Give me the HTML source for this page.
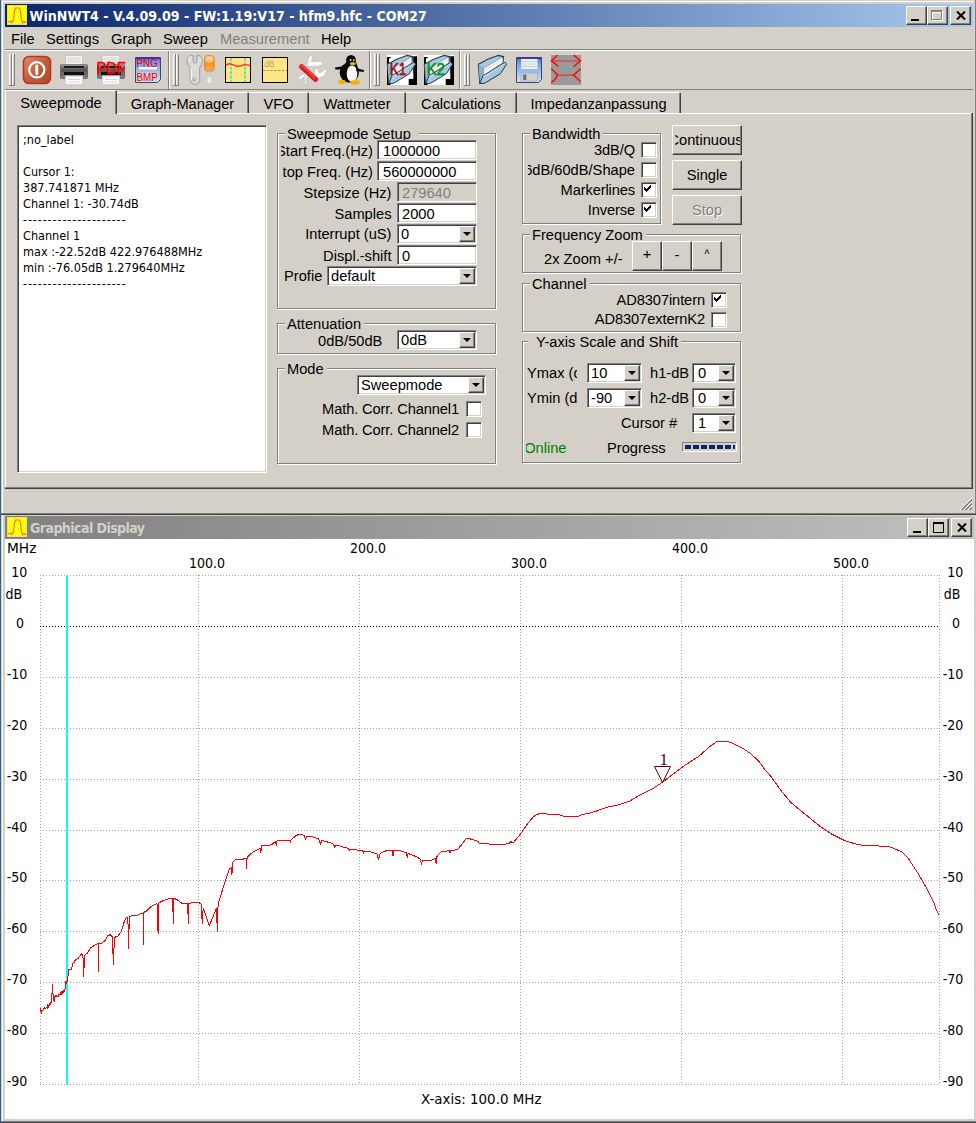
<!DOCTYPE html>
<html><head><meta charset="utf-8"><title>WinNWT4</title>
<style>
*{box-sizing:border-box;margin:0;padding:0}
html,body{width:976px;height:1123px;overflow:hidden}
body{background:#d4d0c8;font-family:"Liberation Sans",sans-serif;font-size:14.67px;color:#000;position:relative}
.a{position:absolute}
.t{position:absolute;white-space:pre;line-height:18px;height:18px}
.r{text-align:right}
.tah{font-family:"DejaVu Sans Condensed","DejaVu Sans",sans-serif}
.btn{position:absolute;background:#d4d0c8;border:1px solid;border-color:#fff #404040 #404040 #fff;box-shadow:inset -1px -1px 0 #808080}
.cb{position:absolute;background:#d4d0c8;border:1px solid;border-color:#fff #404040 #404040 #fff;box-shadow:inset -1px -1px 0 #808080,inset 1px 1px 0 #d4d0c8}
.sunk{position:absolute;background:#fff;border:1px solid;border-color:#808080 #fff #fff #808080;box-shadow:inset 1px 1px 0 #404040,inset -1px -1px 0 #d4d0c8}
.grp{position:absolute;border:1px solid #808080;box-shadow:1px 1px 0 #fff,inset 1px 1px 0 #fff}
.gl{position:absolute;background:#d4d0c8;white-space:pre;line-height:14px;height:14px;padding:0 3px 0 2px}
.chk{position:absolute;width:16px;height:16px;background:#fff;border:1px solid;border-color:#808080 #fff #fff #808080;box-shadow:inset 1px 1px 0 #404040,inset -1px -1px 0 #d4d0c8}
.dd{position:absolute;width:16px;background:#d4d0c8;border:1px solid;border-color:#fff #404040 #404040 #fff;box-shadow:inset -1px -1px 0 #808080}
.dd:after{content:"";position:absolute;left:3px;top:5px;border:4px solid transparent;border-top:4px solid #000;border-bottom:0}
.ck{position:absolute;left:2px;top:2px}
</style></head><body>
<!-- desktop strip -->
<div class="a" style="left:0;top:0;width:1px;height:1123px;background:#2a63a2"></div>
<!-- ===== top window frame ===== -->
<div class="a" style="left:2px;top:1px;width:972px;height:1px;background:#fff"></div>
<div class="a" style="left:2px;top:1px;width:1px;height:512px;background:#fff"></div>
<div class="a" style="left:975px;top:0;width:1px;height:515px;background:#808080"></div>
<div class="a" style="left:1px;top:513px;width:975px;height:1px;background:#808080"></div>
<div class="a" style="left:1px;top:514px;width:975px;height:1px;background:#404040"></div>
<!-- title bar -->
<div class="a" style="left:5px;top:4px;width:968px;height:23px;background:linear-gradient(90deg,#0a246a 0%,#a6caf0 100%)"></div>
<!-- title icon -->
<svg class="a" style="left:7px;top:5px" width="20" height="20" viewBox="0 0 20 20"><rect width="20" height="20" fill="#ffff00"/><rect x="0.5" y="0.5" width="19" height="19" fill="none" stroke="#e8e070"/><path d="M1 16.5 L3 17 L4 16 L5 17.5 L6.5 15 L7.5 6 L8.5 3 L12.5 3 L13.5 6 L14.5 15 L15.5 18 L17 16.5 L18 17.5 L19 17" fill="none" stroke="#ff7010" stroke-width="1.1"/></svg>
<div class="t tah" style="left:29.5px;top:7px;color:#fff;font-weight:bold;font-size:14.1px;line-height:19px;height:19px">WinNWT4 - V.4.09.09 - FW:1.19:V17 - hfm9.hfc - COM27</div>
<!-- title buttons -->
<div class="btn" style="left:906px;top:6px;width:21px;height:19px"><div class="a" style="left:4px;top:12px;width:8px;height:2px;background:#000"></div></div>
<div class="btn" style="left:927px;top:6px;width:21px;height:19px"><div class="a" style="left:4px;top:4px;width:11px;height:10px;border:1px solid #fff;border-top:2px solid #fff"></div><div class="a" style="left:3px;top:3px;width:11px;height:10px;border:1px solid #808080;border-top:2px solid #808080"></div></div>
<div class="btn" style="left:950px;top:6px;width:21px;height:19px"><svg class="a" style="left:4.5px;top:4px" width="10" height="9" viewBox="0 0 10 9"><path d="M1 0.5 L9 8.5 M9 0.5 L1 8.5" stroke="#000" stroke-width="2"/></svg></div>
<!-- menu -->
<div class="t" style="left:11px;top:30px">File</div>
<div class="t" style="left:46px;top:30px">Settings</div>
<div class="t" style="left:111px;top:30px">Graph</div>
<div class="t" style="left:163px;top:30px">Sweep</div>
<div class="t" style="left:220px;top:30px;color:#808080">Measurement</div>
<div class="t" style="left:321px;top:30px">Help</div>
<div class="a" style="left:5px;top:49px;width:968px;height:1px;background:#808080"></div>
<div class="a" style="left:5px;top:50px;width:968px;height:1px;background:#fff"></div>
<div class="a" style="left:5px;top:89px;width:968px;height:1px;background:#808080"></div>
<!-- toolbar -->
<svg class="a" style="left:0;top:51px" width="600" height="38" viewBox="0 51 600 38">
<defs>
<linearGradient id="gp" x1="0" y1="0" x2="1" y2="1"><stop offset="0" stop-color="#dc9070"/><stop offset="0.5" stop-color="#c0603c"/><stop offset="1" stop-color="#ac4624"/></linearGradient>
<linearGradient id="gf" x1="0" y1="0" x2="0" y2="1"><stop offset="0" stop-color="#5078d8"/><stop offset="0.4" stop-color="#88b2ee"/><stop offset="1" stop-color="#d0e4f8"/></linearGradient>
<linearGradient id="go" x1="0" y1="0" x2="0" y2="1"><stop offset="0" stop-color="#ffb860"/><stop offset="0.5" stop-color="#ff9010"/><stop offset="1" stop-color="#f8ac60"/></linearGradient>
<linearGradient id="gb" x1="0" y1="0" x2="1" y2="1"><stop offset="0" stop-color="#c8e2f4"/><stop offset="1" stop-color="#86b2d2"/></linearGradient>
<g id="hdl"><rect x="0" y="0" width="3" height="32" fill="#808080"/><rect x="0" y="0" width="2" height="31" fill="#fff"/><rect x="1" y="1" width="1" height="30" fill="#d4d0c8"/><rect x="3" y="0" width="3" height="32" fill="#808080"/><rect x="3" y="0" width="2" height="31" fill="#fff"/><rect x="4" y="1" width="1" height="30" fill="#d4d0c8"/></g>
<g id="prn"><rect x="5.5" y="0.5" width="17" height="9" fill="#f4f4f4" stroke="#c8c8c8"/><rect x="7" y="2" width="14" height="6" fill="#e4e4e4"/><path d="M2 9 H26 Q28 9 28 11 V22 Q28 24 26 24 H2 Q0 24 0 22 V11 Q0 9 2 9 Z" fill="#6a6a6a"/><rect x="1" y="9" width="26" height="3" fill="#8a8a8a"/><rect x="4" y="11" width="20" height="2" fill="#1c1c1c"/><rect x="1" y="14" width="26" height="3" fill="#585858"/><rect x="4" y="17" width="20" height="3" fill="#101010"/><rect x="1" y="20.5" width="26" height="3" fill="#7c7c7c"/><rect x="5.5" y="21" width="17" height="8.5" fill="#fafafa" stroke="#d0d0d0"/><rect x="8" y="24" width="12" height="1" fill="#d4d4d4"/><rect x="8" y="26.5" width="12" height="1" fill="#d8d8d8"/></g>
<g id="fld"><path d="M0.3 9.3 L6.75 6.1 L8.4 4.8 L19.9 0.4 L25.6 1.6 L25.2 5.7 L24 12 L1.8 28.6 Z" fill="#a4cce6" stroke="#22384a" stroke-width="1.1" stroke-linejoin="round"/><path d="M0.6 9.6 L5.9 12.6 L4.3 21.2 L1.9 28 Z" fill="#8cb2cc"/><path d="M5.9 13 L23.6 2.4 L25 3 L24.8 7.7 L5.1 20.6 Z" fill="#f7f7f7" stroke="#707070" stroke-width="0.6"/><path d="M6.6 15.4 L24.6 4.6" stroke="#cfcfcf" stroke-width="0.7"/><path d="M1.8 28.6 L5.1 20.4 L9.2 18.4 L27.2 7.3 L28.5 9.3 L22.3 18.8 L6.75 28.2 Z" fill="url(#gb)" stroke="#22384a" stroke-width="1" stroke-linejoin="round"/><path d="M5.6 20.9 L9.4 19.2 L27 8.2" stroke="#e0f0fa" stroke-width="0.7" fill="none"/></g>
</defs>
<use href="#hdl" x="9" y="54"/>
<rect x="23.5" y="56.5" width="27" height="27" rx="5.5" fill="url(#gp)" stroke="#b83422" stroke-width="1.6"/>
<circle cx="36.8" cy="69.8" r="7.6" fill="none" stroke="#fff" stroke-width="2.2"/><rect x="35.4" y="64.5" width="2.8" height="10.6" rx="1" fill="#fff"/>
<use href="#prn" x="60" y="55"/>
<use href="#prn" x="97" y="55"/>
<text x="96.4" y="74.3" font-family="Liberation Sans, sans-serif" font-size="15.8" fill="#ff0000" stroke="#ff0000" stroke-width="0.5" textLength="29.4" lengthAdjust="spacingAndGlyphs">PDF</text>
<path d="M135.5 57.5 H160.5 V79.5 L157.5 82.5 H135.5 Z" fill="url(#gf)" stroke="#38486c"/><rect x="136" y="57.5" width="24" height="1.6" fill="#4030a8"/><rect x="139" y="67" width="18" height="2.4" fill="#fff"/><rect x="139" y="72.5" width="18" height="8.5" fill="#c4cede"/>
<text x="136.4" y="66.9" font-family="Liberation Sans, sans-serif" font-size="10.6" fill="#ff0000" textLength="21.5" lengthAdjust="spacingAndGlyphs">PNG</text>
<text x="136.4" y="80.5" font-family="Liberation Sans, sans-serif" font-size="10.6" fill="#ff0000" textLength="21.5" lengthAdjust="spacingAndGlyphs">BMP</text>
<rect x="168" y="51" width="1" height="38" fill="#808080"/><rect x="169" y="51" width="1" height="38" fill="#fff"/>
<use href="#hdl" x="173" y="54"/>
<!-- wrench -->
<path d="M187 60.7 Q187.6 56.6 190.7 55.3 L193.1 55.7 L193.1 61.5 Q193.4 63.1 195.2 63.1 Q196.6 63.1 196.8 61.5 L196.8 55.7 L200.1 55.7 Q202.4 57.4 202.5 60.7 Q202 65 199.7 67.6 L199.7 80.3 Q199.4 84.2 194.8 84.4 Q190.5 84.2 190.2 80.3 L190.2 67.6 Q187.4 65 187 60.7 Z" fill="#dadada" stroke="#989898" stroke-width="0.9"/><path d="M188.4 60.5 Q188.8 57.8 190.8 56.6 M191.4 68 L191.4 80" stroke="#f8f8f8" stroke-width="1.2" fill="none"/><circle cx="194.2" cy="79.6" r="1.7" fill="#c8c8c8" stroke="#a0a0a0" stroke-width="0.7"/>
<!-- screwdriver -->
<rect x="204.6" y="55.6" width="9.6" height="15.6" rx="3" fill="url(#go)" stroke="#e08038" stroke-width="0.9"/><rect x="205.6" y="56.4" width="7.6" height="6" rx="2.4" fill="#fff" opacity="0.45"/><rect x="208" y="71.3" width="2.6" height="6" fill="#d4d4d4" stroke="#b0b0b0" stroke-width="0.5"/><path d="M207.4 76.6 Q205.8 81.5 207.6 83.8 H211.2 Q213 81.5 211.4 76.6 Z" fill="#ececec" stroke="#bcbcbc" stroke-width="0.6"/>
<!-- chart icon -->
<rect x="225.5" y="57.5" width="25" height="25" fill="#ffe680" stroke="#000"/><path d="M231 58 V82 M245 58 V82" stroke="#60dcc8" stroke-width="1.8" stroke-dasharray="3.2 1.2"/><path d="M226 65.2 L229.2 63.6 L233.3 64.8 L236.6 66.4 L240.7 66 L244 64.6 L247.2 64.8 L250 65.6" fill="none" stroke="#ff2a18" stroke-width="1.35" stroke-linejoin="round"/>
<!-- dB icon -->
<rect x="262.5" y="57.5" width="25" height="25" fill="#ffe680" stroke="#000"/><text x="264" y="66.8" font-family="Liberation Sans, sans-serif" font-size="8.6" fill="#b0a878">dB</text><path d="M263 70.5 H287" stroke="#707888" stroke-width="0.8" stroke-dasharray="2.2 1.6"/>
<!-- swiss knife -->
<g stroke-linecap="round" stroke-linejoin="round"><path d="M305.4 65.6 L309.8 55.6 L311.4 55.2 L312.8 58.6 L311.4 59.4 L312.6 61.2 L309.6 67 Z" fill="#fff" stroke="#b4b4b4" stroke-width="0.6"/><path d="M308 61.8 L320.6 61.6 Q323.6 62.6 322.6 64.6 Q320 66.6 314 66.4 L308 66.4 Z" fill="#fff" stroke="#b8b8b8" stroke-width="0.6"/><path d="M315 69.4 L317.6 68 L319.2 73 L322.6 71.6 L324.8 69 L326.8 70.6 L324.4 75.8 L318 78.6 L314.6 74 Z" fill="#fff" stroke="#b8b8b8" stroke-width="0.6"/><path d="M305.6 71.6 L298 78 L299.4 80.2 L307.4 75 Z" fill="#fafafa" stroke="#b8b8b8" stroke-width="0.6"/><rect x="304.2" y="72.6" width="3" height="11.8" rx="1" fill="#ececec" stroke="#b4b4b4" stroke-width="0.5"/><path d="M304.4 76 h2.6 M304.4 78.4 h2.6 M304.4 80.8 h2.6" stroke="#c4c4c4" stroke-width="0.5"/><path d="M301.6 66.6 L315.6 79.4" stroke="#c41414" stroke-width="5"/><path d="M301.6 66.2 L315.6 79" stroke="#e62424" stroke-width="3.8"/><path d="M301.8 65 L314.6 76.8" stroke="#f25858" stroke-width="1.1"/></g>
<!-- penguin -->
<ellipse cx="349.3" cy="72.6" rx="9.6" ry="10.2" fill="#080808"/><ellipse cx="351" cy="60.4" rx="4.9" ry="5.4" fill="#080808"/><path d="M346 62 L344 68 L358 68 L356 62 Z" fill="#080808"/><ellipse cx="352" cy="73.6" rx="5.3" ry="8.2" fill="#f6f6f6"/><path d="M345 66 L335 67.6 L335.4 69.6 L345 69.4 Z M356.6 68 L364.2 70.2 L363.6 72 L356.2 71 Z" fill="#080808"/><ellipse cx="352.8" cy="63.6" rx="3" ry="1.6" fill="#f0b400"/><circle cx="350.6" cy="60" r="0.9" fill="#e8e8e8"/><circle cx="353.8" cy="60.2" r="0.9" fill="#e8e8e8"/><ellipse cx="342" cy="82" rx="3.8" ry="2.2" fill="#f0b400"/><ellipse cx="354.8" cy="82.6" rx="5" ry="2.4" fill="#f0b400"/>
<rect x="369" y="51" width="1" height="38" fill="#808080"/><rect x="370" y="51" width="1" height="38" fill="#fff"/>
<use href="#hdl" x="374" y="54"/>
<!-- K1 / K2 -->
<rect x="387" y="55" width="30" height="30" fill="#fff"/><path d="M387 57.5 h2 v27.5 h-2 z M387 57 h3.7 v1.3 h-3.7 z M387 83.6 h3.7 v1.4 h-3.7 z M413.2 56.2 h3.8 v28.8 h-3.8 z M408.7 78.8 h8.3 v6.2 h-8.3 z" fill="#000"/><rect x="409" y="73.9" width="4.2" height="4.9" fill="#fff"/><use href="#fld" x="387" y="55"/>
<text x="389.8" y="74.6" font-family="Liberation Sans, sans-serif" font-size="15.6" fill="#a00814" stroke="#a00814" stroke-width="0.45" textLength="16.6" lengthAdjust="spacingAndGlyphs">K1</text>
<rect x="424" y="55" width="30" height="30" fill="#fff"/><path d="M424 57.5 h2 v27.5 h-2 z M424 57 h3.7 v1.3 h-3.7 z M424 83.6 h3.7 v1.4 h-3.7 z M450.2 56.2 h3.8 v28.8 h-3.8 z M445.7 78.8 h8.3 v6.2 h-8.3 z" fill="#000"/><rect x="446" y="73.9" width="4.2" height="4.9" fill="#fff"/><use href="#fld" x="424" y="55"/>
<text x="426.7" y="74.6" font-family="Liberation Sans, sans-serif" font-size="15.6" fill="#089018" stroke="#089018" stroke-width="0.45" textLength="18.2" lengthAdjust="spacingAndGlyphs">K2</text>
<rect x="459" y="51" width="1" height="38" fill="#808080"/><rect x="460" y="51" width="1" height="38" fill="#fff"/>
<use href="#hdl" x="464" y="54"/>
<use href="#fld" x="478" y="55"/>
<!-- floppy -->
<path d="M516.5 57.5 H541.5 V79.5 L538.5 82.5 H516.5 Z" fill="url(#gf)" stroke="#38486c"/><rect x="517" y="57.5" width="24" height="1.6" fill="#4030a8"/><rect x="521" y="59" width="16.5" height="10" fill="#f0f4f8"/><path d="M521 61.5 H537.5 M521 64 H537.5 M521 66.5 H537.5" stroke="#a8c8d8" stroke-width="0.8"/><rect x="521" y="73" width="16.5" height="8" fill="#d0d0d0" stroke="#8898a8" stroke-width="0.5"/><rect x="523" y="74.5" width="3.4" height="5.5" fill="#707070"/>
<!-- red arrows -->
<rect x="551" y="55" width="30" height="30" fill="#9a9a9a"/><path d="M552 61 H580 M557.4 75.1 H573.6" fill="none" stroke="#e23434" stroke-width="1.1"/><path d="M557.4 55.2 L551.4 60.7 L558.4 66.4 M573.6 55.2 L580.6 60.7 L573.6 66.6 M551.2 68.4 L557.6 75 Q556 79.5 551.2 82.7 M580.7 68.7 L573.6 75.1 L580.7 81.8" fill="none" stroke="#ff0808" stroke-width="1.5"/>
</svg>
<!-- tabs -->
<div class="a" style="left:5px;top:90px;width:110px;height:1px;background:#fff"></div>
<div class="a" style="left:5px;top:90px;width:1px;height:398px;background:#fff"></div>
<div class="a" style="left:115px;top:91px;width:1px;height:23px;background:#808080"></div>
<div class="a" style="left:116px;top:91px;width:1px;height:23px;background:#404040"></div>
<div class="a" style="left:117px;top:113px;width:854px;height:1px;background:#fff"></div>
<div class="a" style="left:971px;top:113px;width:1px;height:376px;background:#808080"></div>
<div class="a" style="left:972px;top:113px;width:1px;height:376px;background:#404040"></div>
<div class="a" style="left:5px;top:487px;width:967px;height:1px;background:#808080"></div>
<div class="a" style="left:5px;top:488px;width:968px;height:1px;background:#404040"></div>
<div class="t" style="left:5.5px;top:94px;width:111px;text-align:center">Sweepmode</div>
<div class="a" style="left:117px;top:92px;width:130px;height:1px;background:#fff"></div>
<div class="a" style="left:247px;top:93px;width:1px;height:20px;background:#808080"></div>
<div class="a" style="left:248px;top:93px;width:1px;height:20px;background:#404040"></div>
<div class="t" style="left:117px;top:95px;width:131px;text-align:center">Graph-Manager</div>
<div class="a" style="left:249px;top:92px;width:58px;height:1px;background:#fff"></div>
<div class="a" style="left:307px;top:93px;width:1px;height:20px;background:#808080"></div>
<div class="a" style="left:308px;top:93px;width:1px;height:20px;background:#404040"></div>
<div class="t" style="left:249px;top:95px;width:59px;text-align:center">VFO</div>
<div class="a" style="left:309px;top:92px;width:95px;height:1px;background:#fff"></div>
<div class="a" style="left:404px;top:93px;width:1px;height:20px;background:#808080"></div>
<div class="a" style="left:405px;top:93px;width:1px;height:20px;background:#404040"></div>
<div class="t" style="left:309px;top:95px;width:96px;text-align:center">Wattmeter</div>
<div class="a" style="left:406px;top:92px;width:109px;height:1px;background:#fff"></div>
<div class="a" style="left:515px;top:93px;width:1px;height:20px;background:#808080"></div>
<div class="a" style="left:516px;top:93px;width:1px;height:20px;background:#404040"></div>
<div class="t" style="left:406px;top:95px;width:110px;text-align:center">Calculations</div>
<div class="a" style="left:517px;top:92px;width:162px;height:1px;background:#fff"></div>
<div class="a" style="left:679px;top:93px;width:1px;height:20px;background:#808080"></div>
<div class="a" style="left:680px;top:93px;width:1px;height:20px;background:#404040"></div>
<div class="t" style="left:517px;top:95px;width:163px;text-align:center">Impedanzanpassung</div>
<!-- info text box -->
<div class="sunk" style="left:17px;top:125px;width:250px;height:348px"></div>
<div class="t tah" style="left:23px;top:132px;font-size:12.55px;line-height:16px;height:auto">;no_label

Cursor 1:
387.741871 MHz
Channel 1: -30.74dB
<span style="letter-spacing:0.85px">---------------------</span>
Channel 1
max :-22.52dB 422.976488MHz
min :-76.05dB 1.279640MHz
<span style="letter-spacing:0.85px">---------------------</span></div>
<!-- Sweepmode Setup group -->
<div class="grp" style="left:277px;top:133px;width:219px;height:176px"></div>
<div class="gl" style="left:285px;top:127px;padding-right:8px">Sweepmode Setup</div>
<div class="a" style="left:281px;top:142px;width:92px;height:18px;overflow:hidden"><div class="t" style="right:0;top:0">Start Freq.(Hz)</div></div>
<div class="sunk" style="left:377px;top:140px;width:100px;height:20px"></div><div class="t" style="left:383px;top:142px">1000000</div>
<div class="a" style="left:282.5px;top:163px;width:90.5px;height:18px;overflow:hidden"><div class="t" style="right:0;top:0">Stop Freq. (Hz)</div></div>
<div class="sunk" style="left:377px;top:161px;width:100px;height:20px"></div><div class="t" style="left:383px;top:163px">560000000</div>
<div class="t r" style="left:291px;top:184px;width:100.5px">Stepsize (Hz)</div>
<div class="sunk" style="left:397px;top:182px;width:80px;height:20px;background:#d4d0c8"></div><div class="t" style="left:402px;top:184px;color:#808080">279640</div>
<div class="t r" style="left:291px;top:205px;width:100.5px">Samples</div>
<div class="sunk" style="left:397px;top:203px;width:80px;height:20px"></div><div class="t" style="left:402px;top:205px">2000</div>
<div class="t r" style="left:291px;top:225px;width:100.5px">Interrupt (uS)</div>
<div class="sunk" style="left:397px;top:224px;width:80px;height:20px"></div><div class="dd" style="left:459px;top:226px;height:16px"></div><div class="t" style="left:401px;top:225px">0</div>
<div class="t r" style="left:291px;top:247px;width:100.5px">Displ.-shift</div>
<div class="sunk" style="left:397px;top:245px;width:80px;height:20px"></div><div class="t" style="left:402px;top:246.5px">0</div>
<div class="t" style="left:284px;top:267px">Profie</div>
<div class="sunk" style="left:327px;top:266px;width:150px;height:20px"></div><div class="dd" style="left:459px;top:268px;height:16px"></div><div class="t" style="left:331px;top:267px">default</div>
<!-- Attenuation -->
<div class="grp" style="left:277px;top:323px;width:219px;height:31px"></div>
<div class="gl" style="left:285px;top:316.5px">Attenuation</div>
<div class="t" style="left:318px;top:332px">0dB/50dB</div>
<div class="sunk" style="left:397px;top:330px;width:80px;height:20px"></div><div class="dd" style="left:459px;top:332px;height:16px"></div><div class="t" style="left:401px;top:331px">0dB</div>
<!-- Mode -->
<div class="grp" style="left:277px;top:368px;width:219px;height:96px"></div>
<div class="gl" style="left:285px;top:362px">Mode</div>
<div class="sunk" style="left:357px;top:375px;width:129px;height:20px"></div><div class="dd" style="left:468px;top:377px;height:16px"></div><div class="t" style="left:361px;top:376px">Sweepmode</div>
<div class="t r" style="left:309px;top:400px;width:150px;letter-spacing:-0.12px">Math. Corr. Channel1</div><div class="chk" style="left:466px;top:401px"></div>
<div class="t r" style="left:309px;top:421px;width:150px;letter-spacing:-0.12px">Math. Corr. Channel2</div><div class="chk" style="left:466px;top:422px"></div>
<!-- Bandwidth -->
<div class="grp" style="left:522px;top:133px;width:139px;height:91px"></div>
<div class="gl" style="left:530px;top:127px">Bandwidth</div>
<div class="t r" style="letter-spacing:-0.12px;left:535px;top:141px;width:100px">3dB/Q</div><div class="chk" style="left:641px;top:142px"></div>
<div class="a" style="left:528px;top:161px;width:107px;height:18px;overflow:hidden"><div class="t" style="right:0;top:0">6dB/60dB/Shape</div></div><div class="chk" style="left:641px;top:162px"></div>
<div class="t r" style="letter-spacing:-0.12px;left:535px;top:181px;width:100px">Markerlines</div><div class="chk" style="left:641px;top:182px"><svg class="ck" width="7" height="7" viewBox="0 0 7 7" shape-rendering="crispEdges"><path d="M0 2h1v1h1v1h1v-1h1v-1h1v-1h1v-1h1v3h-1v1h-1v1h-1v1h-1v1h-1v-1h-1v-1h-1z" fill="#000"/></svg></div>
<div class="t r" style="letter-spacing:-0.12px;left:535px;top:201px;width:100px">Inverse</div><div class="chk" style="left:641px;top:202px"><svg class="ck" width="7" height="7" viewBox="0 0 7 7" shape-rendering="crispEdges"><path d="M0 2h1v1h1v1h1v-1h1v-1h1v-1h1v-1h1v3h-1v1h-1v1h-1v1h-1v1h-1v-1h-1v-1h-1z" fill="#000"/></svg></div>
<!-- Buttons -->
<div class="btn" style="left:672px;top:125px;width:70px;height:30px"><div class="a" style="left:2px;top:0;width:65px;height:28px;overflow:hidden"><div class="t" style="left:-7.5px;top:5px;width:76px;text-align:center">Continuous</div></div></div>
<div class="btn" style="left:672px;top:160px;width:70px;height:30px"><div class="t" style="left:0;top:5px;width:68px;text-align:center">Single</div></div>
<div class="btn" style="left:672px;top:195px;width:70px;height:30px"><div class="t" style="left:0;top:5px;width:68px;text-align:center;color:#808080;text-shadow:1px 1px 0 #fff">Stop</div></div>
<!-- Frequency Zoom -->
<div class="grp" style="left:522px;top:234px;width:219px;height:39px"></div>
<div class="gl" style="left:530px;top:228px">Frequency Zoom</div>
<div class="t" style="left:544px;top:250px">2x Zoom +/-</div>
<div class="btn" style="left:632px;top:241px;width:30px;height:30px"><div class="t" style="left:0;top:3px;width:28px;text-align:center">+</div></div>
<div class="btn" style="left:662px;top:241px;width:30px;height:30px"><div class="t" style="left:0;top:4px;width:28px;text-align:center">-</div></div>
<div class="btn" style="left:692px;top:241px;width:30px;height:30px"><div class="t" style="left:0;top:5px;width:28px;text-align:center;font-size:13px;top:3px;transform:scaleX(.8)">^</div></div>
<!-- Channel -->
<div class="grp" style="left:522px;top:283px;width:219px;height:49px"></div>
<div class="gl" style="left:530px;top:277px">Channel</div>
<div class="t r" style="letter-spacing:-0.1px;left:555px;top:291px;width:150px">AD8307intern</div><div class="chk" style="left:711px;top:292px"><svg class="ck" width="7" height="7" viewBox="0 0 7 7" shape-rendering="crispEdges"><path d="M0 2h1v1h1v1h1v-1h1v-1h1v-1h1v-1h1v3h-1v1h-1v1h-1v1h-1v1h-1v-1h-1v-1h-1z" fill="#000"/></svg></div>
<div class="t r" style="letter-spacing:-0.1px;left:555px;top:310px;width:150px">AD8307externK2</div><div class="chk" style="left:711px;top:312px"></div>
<!-- Y-axis -->
<div class="grp" style="left:522px;top:341px;width:219px;height:122px"></div>
<div class="gl" style="left:528px;top:335px;padding-left:8px">Y-axis Scale and Shift</div>
<div class="a" style="left:527px;top:364px;width:50px;height:18px;overflow:hidden"><div class="t" style="left:0;top:0">Ymax (dB)</div></div>
<div class="sunk" style="left:587px;top:363px;width:55px;height:20px"></div><div class="dd" style="left:624px;top:365px;height:16px"></div><div class="t" style="left:591px;top:364px">10</div>
<div class="t" style="left:650px;top:364px">h1-dB</div>
<div class="sunk" style="left:692px;top:363px;width:44px;height:20px"></div><div class="dd" style="left:718px;top:365px;height:16px"></div><div class="t" style="left:698px;top:364px">0</div>
<div class="a" style="left:527px;top:389px;width:50px;height:18px;overflow:hidden"><div class="t" style="left:0;top:0">Ymin (dB)</div></div>
<div class="sunk" style="left:587px;top:388px;width:55px;height:20px"></div><div class="dd" style="left:624px;top:390px;height:16px"></div><div class="t" style="left:591px;top:389px">-90</div>
<div class="t" style="left:650px;top:389px">h2-dB</div>
<div class="sunk" style="left:692px;top:388px;width:44px;height:20px"></div><div class="dd" style="left:718px;top:390px;height:16px"></div><div class="t" style="left:698px;top:389px">0</div>
<div class="t" style="left:621px;top:413.5px">Cursor #</div>
<div class="sunk" style="left:692px;top:413px;width:44px;height:20px"></div><div class="dd" style="left:718px;top:415px;height:16px"></div><div class="t" style="left:698px;top:414px">1</div>
<div class="a" style="left:526px;top:439px;width:40.5px;height:18px;overflow:hidden"><div class="t" style="right:0;top:0;color:#008000">Online</div></div>
<div class="t" style="left:607px;top:439px">Progress</div>
<div class="a" style="left:682px;top:442px;width:55px;height:10px;border:1px solid;border-color:#808080 #fff #fff #808080"></div>
<div class="a" style="left:685px;top:445px;width:50px;height:4px;background:repeating-linear-gradient(90deg,#0a246a 0,#0a246a 6px,transparent 6px,transparent 8px)"></div>
<!-- size grip -->
<svg class="a" style="left:959px;top:497px" width="14" height="14" viewBox="0 0 14 14"><path d="M13 1 L1 13 M13 5 L5 13 M13 9 L9 13" stroke="#fff" stroke-width="1"/><path d="M13 2 L2 13 M13 3 L3 13 M13 6 L6 13 M13 7 L7 13 M13 10 L10 13 M13 11 L11 13" stroke="#808080" stroke-width="1"/></svg>
<!-- ===== Graphical Display window ===== -->
<div class="a" style="left:2px;top:515px;width:1px;height:1606px;background:#fff"></div>
<div class="a" style="left:5px;top:516px;width:969px;height:23px;background:linear-gradient(90deg,#808080 0%,#c0c0c0 100%)"></div>
<svg class="a" style="left:7px;top:517px" width="20" height="20" viewBox="0 0 20 20"><rect width="20" height="20" fill="#ffff00"/><rect x="0.5" y="0.5" width="19" height="19" fill="none" stroke="#e8e070"/><path d="M1 16.5 L3 17 L4 16 L5 17.5 L6.5 15 L7.5 6 L8.5 3 L12.5 3 L13.5 6 L14.5 15 L15.5 18 L17 16.5 L18 17.5 L19 17" fill="none" stroke="#ff7010" stroke-width="1.1"/></svg>
<div class="t tah" style="left:30px;top:519px;color:#d4d0c8;font-weight:bold;font-size:14px;letter-spacing:-0.55px;line-height:19px;height:19px">Graphical Display</div>
<div class="btn" style="left:907px;top:518px;width:21px;height:19px"><div class="a" style="left:5px;top:12px;width:8px;height:2px;background:#000"></div></div>
<div class="btn" style="left:928px;top:518px;width:21px;height:19px"><div class="a" style="left:4px;top:3px;width:11px;height:11px;border:1px solid #000;border-top:2px solid #000"></div></div>
<div class="btn" style="left:951px;top:518px;width:21px;height:19px"><svg class="a" style="left:5px;top:4px" width="10" height="9" viewBox="0 0 10 9"><path d="M1 0.5 L9 8.5 M9 0.5 L1 8.5" stroke="#000" stroke-width="2"/></svg></div>
<svg class="a" style="left:5px;top:539px" width="969" height="580" viewBox="0 0 969 580">
<rect width="969" height="580" fill="#fff"/>
<g shape-rendering="crispEdges" fill="none" stroke-width="1" stroke-dasharray="1 2">
<path d="M35.5,36 V546" stroke="#a0a0a0"/>
<path d="M193.5,36 V546" stroke="#a0a0a0"/>
<path d="M354.5,36 V546" stroke="#a0a0a0"/>
<path d="M515.5,36 V546" stroke="#a0a0a0"/>
<path d="M676.5,36 V546" stroke="#a0a0a0"/>
<path d="M837.5,36 V546" stroke="#a0a0a0"/>
<path d="M934.5,36 V546" stroke="#a0a0a0"/>
<path d="M35,36.5 H935" stroke="#a0a0a0"/>
<path d="M35,87.5 H935" stroke="#000"/>
<path d="M35,138.5 H935" stroke="#a0a0a0"/>
<path d="M35,189.5 H935" stroke="#a0a0a0"/>
<path d="M35,240.5 H935" stroke="#a0a0a0"/>
<path d="M35,291.5 H935" stroke="#a0a0a0"/>
<path d="M35,341.5 H935" stroke="#a0a0a0"/>
<path d="M35,392.5 H935" stroke="#a0a0a0"/>
<path d="M35,443.5 H935" stroke="#a0a0a0"/>
<path d="M35,494.5 H935" stroke="#a0a0a0"/>
<path d="M35,545.5 H935" stroke="#a0a0a0"/>
</g>
<rect x="61" y="37" width="2" height="509" fill="#00ffff"/>
<path d="M35.2,470.0 L35.4,472.5 L35.6,469.5 L36.5,474.5 L36.8,471.0 L37.5,471.5 L38.5,470.5 L39.6,468.5 L40.5,469.3 L41.5,468.2 L42.2,469.0 L42.4,465.0 L42.8,469.5 L43.5,468.8 L44.3,464.0 L44.8,467.0 L45.5,463.6 L46.3,463.4 L46.5,454.5 L47.3,454.0 L47.4,445.3 L47.7,454.8 L48.4,455.0 L48.6,461.5 L49.2,458.5 L49.5,462.8 L50.0,457.5 L50.6,456.3 L52.0,457.4 L53.7,457.0 L54.0,454.8 L55.4,456.0 L55.8,453.5 L56.5,455.5 L57.0,452.5 L57.6,454.5 L58.2,451.5 L58.8,453.6 L59.4,451.0 L60.0,450.8 L60.5,442.2 L60.8,446.0 L61.4,442.0 L62.4,442.4 L62.6,437.3 L63.5,436.7 L63.7,430.5 L66.5,430.5 L66.7,428.0 L67.5,427.8 L67.7,424.4 L69.0,423.5 L70.3,421.0 L73.2,419.4 L76.2,414.9 L77.9,416.3 L78.7,437.8 L79.5,416.3 L82.4,414.2 L85.5,409.1 L90.6,405.4 L93.2,404.6 L93.4,432.7 L93.9,404.6 L96.7,404.0 L99.8,402.0 L102.9,396.4 L105.3,395.8 L107.4,397.8 L108.4,425.5 L109.4,398.5 L113.1,396.8 L116.2,392.7 L119.3,382.5 L121.7,378.0 L122.9,378.4 L123.4,409.5 L124.4,377.4 L127.5,376.7 L131.6,376.7 L136.7,374.3 L138.1,373.9 L138.3,405.4 L138.9,373.3 L141.8,371.8 L145.9,367.7 L152.0,364.4 L153.1,394.4 L153.7,364.0 L158.2,361.6 L164.3,359.5 L167.8,359.1 L168.2,384.5 L168.9,359.1 L172.5,361.0 L177.7,365.0 L182.8,364.4 L183.2,384.5 L183.8,364.4 L188.9,363.6 L194.0,363.6 L196.1,365.0 L197.3,384.5 L198.2,369.2 L204.3,386.6 L211.5,369.2 L212.3,392.7 L213.1,365.0 L218.6,347.6 L224.5,329.9 L226.5,328.5 L226.9,336.0 L227.5,323.7 L229.6,321.1 L232.7,320.3 L237.8,320.3 L241.1,319.0 L241.5,329.5 L242.1,318.2 L248.0,312.9 L255.2,309.4 L255.8,313.5 L256.6,306.9 L266.5,305.9 L270.6,302.2 L271.2,306.3 L272.2,301.2 L280.8,301.2 L284.9,301.2 L285.3,303.3 L286.0,301.0 L291.1,296.5 L295.2,295.1 L299.3,296.5 L300.5,300.2 L301.7,297.7 L305.4,297.3 L313.6,299.8 L315.7,305.3 L316.7,301.2 L328.0,304.7 L330.0,308.4 L331.0,305.9 L343.3,309.4 L344.3,311.5 L345.4,310.0 L357.7,311.9 L358.3,314.5 L359.1,312.1 L362.8,312.1 L372.0,314.9 L373.4,320.7 L375.1,314.5 L381.2,311.7 L387.4,311.0 L388.0,316.6 L388.8,311.0 L395.6,311.7 L401.7,314.1 L402.3,318.6 L403.2,314.5 L411.6,317.8 L415.7,320.3 L416.4,325.6 L417.4,321.5 L426.0,321.5 L430.5,319.4 L431.1,325.0 L431.7,317.8 L436.2,312.7 L444.4,311.7 L445.0,313.7 L445.6,311.7 L452.6,310.6 L456.7,305.5 L461.2,299.8 L464.9,299.8 L473.1,302.4 L473.5,304.0 L481.3,304.5 L488.5,305.9 L497.7,305.5 L503.9,304.5 L505.9,302.4 L508.0,304.1 L516.1,294.2 L522.3,285.0 L528.4,277.8 L532.5,275.2 L537.7,274.2 L542.8,275.2 L553.0,275.4 L558.2,277.2 L564.3,277.8 L573.5,277.4 L576.6,275.4 L583.4,274.5 L591.6,272.0 L601.9,268.3 L614.2,265.7 L624.4,262.2 L636.7,255.0 L649.0,248.9 L658.2,242.7 L667.5,235.5 L679.8,226.3 L694.1,217.1 L704.3,207.9 L711.5,202.8 L716.6,202.1 L722.8,202.4 L728.9,204.8 L737.1,208.9 L745.3,214.4 L753.5,221.8 L759.7,230.4 L765.5,236.9 L775.7,251.2 L786.0,263.5 L798.3,273.7 L814.7,287.1 L827.0,295.3 L839.3,301.4 L853.6,305.9 L872.0,306.9 L884.3,307.6 L896.6,312.7 L902.8,318.8 L913.0,334.2 L921.2,348.5 L929.4,364.9 L931.5,371.0 L934.0,375.5" fill="none" stroke="#ff0000" stroke-width="1" stroke-linejoin="round" shape-rendering="crispEdges"/>
<path d="M649.5,227.5 H665.5 L657.5,243.5 Z" fill="none" stroke="#600000" stroke-width="1"/>
<g font-family="DejaVu Sans Condensed, DejaVu Sans, sans-serif" font-size="14" fill="#000" style="white-space:pre">
<text x="654.6" y="225.60000000000002" fill="#600000" font-family="Liberation Serif, serif" font-size="17">1</text>
<text x="2" y="14" textLength="29.4" lengthAdjust="spacingAndGlyphs">MHz</text>
<text x="184" y="28.5">100.0</text>
<text x="345" y="14">200.0</text>
<text x="506" y="28.5">300.0</text>
<text x="667" y="14">400.0</text>
<text x="828" y="28.5">500.0</text>
<text x="22.3" y="38.0" text-anchor="end">10</text>
<text x="958.3" y="38.0" text-anchor="end">10</text>
<text x="19.1" y="89.0" text-anchor="end">0</text>
<text x="955.1" y="89.0" text-anchor="end">0</text>
<text x="22.3" y="140.0" text-anchor="end">-10</text>
<text x="958.3" y="140.0" text-anchor="end">-10</text>
<text x="22.3" y="191.0" text-anchor="end">-20</text>
<text x="958.3" y="191.0" text-anchor="end">-20</text>
<text x="22.3" y="242.0" text-anchor="end">-30</text>
<text x="958.3" y="242.0" text-anchor="end">-30</text>
<text x="22.3" y="293.0" text-anchor="end">-40</text>
<text x="958.3" y="293.0" text-anchor="end">-40</text>
<text x="22.3" y="343.0" text-anchor="end">-50</text>
<text x="958.3" y="343.0" text-anchor="end">-50</text>
<text x="22.3" y="394.0" text-anchor="end">-60</text>
<text x="958.3" y="394.0" text-anchor="end">-60</text>
<text x="22.3" y="445.0" text-anchor="end">-70</text>
<text x="958.3" y="445.0" text-anchor="end">-70</text>
<text x="22.3" y="496.0" text-anchor="end">-80</text>
<text x="958.3" y="496.0" text-anchor="end">-80</text>
<text x="22.3" y="547.0" text-anchor="end">-90</text>
<text x="958.3" y="547.0" text-anchor="end">-90</text>
<text x="0.5" y="60.200000000000045">dB</text>
<text x="938.8" y="60.200000000000045">dB</text>
<text x="416" y="564.5" textLength="120.5" lengthAdjust="spacingAndGlyphs">X-axis: 100.0 MHz</text>
</g></svg>
<div class="a" style="left:1px;top:1121px;width:975px;height:1px;background:#808080"></div>
<div class="a" style="left:1px;top:1122px;width:975px;height:1px;background:#404040"></div>
</body></html>
